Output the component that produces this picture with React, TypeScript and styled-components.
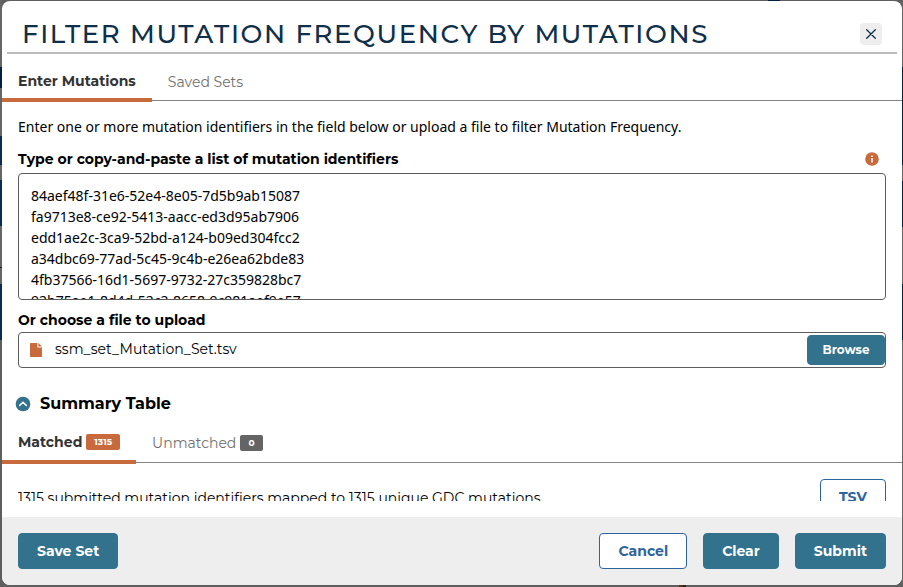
import React from "react";
import styled, { createGlobalStyle, css } from "styled-components";

const teal = "#32728d";
const blue = "#2d649e";
const orange = "#c86a3c";

const GlobalStyle = createGlobalStyle`
  * { box-sizing: border-box; }
  body {
    margin: 0;
    font-family: Montserrat, Inter, sans-serif;
    font-size: 14px;
    line-height: 20px;
    color: #000;
  }
`;

const Backdrop = styled.div`
  height: 587px;
  padding: 1px 1px 2px 2px;
  overflow: hidden;
  background:
    linear-gradient(90deg, #03213f, #03213f) 768px 0 / 12px 1px no-repeat,
    linear-gradient(#5b3010, #5b3010) 679px 585px / 4px 2px no-repeat,
    linear-gradient(#222, #222) 683px 585px / 3px 2px no-repeat,
    linear-gradient(
      #666 0 67px,
      #03213f 67px 88px,
      #666 88px 136px,
      #0b2c50 136px 165px,
      #666 165px 180px,
      #0b2c50 180px 226px,
      #666 226px 267px,
      #222 267px 268px,
      #666 268px 284px,
      #0b2c50 284px 340px,
      #5e5e5e 340px
    ) 0 0 / 2px 100% no-repeat,
    linear-gradient(
      #666 0 67px,
      #03213f 67px 165px,
      #666 165px 181px,
      #03213f 181px 227px,
      #666 227px 284px,
      #03213f 284px 340px,
      #666 340px
    ) 902px 0 / 1px 100% no-repeat,
    #5e5e5e;
`;

const Dialog = styled.section`
  display: flex;
  flex-direction: column;
  height: 584px;
  border-radius: 8px;
  overflow: hidden;
  background: #fff;
`;

const Header = styled.header`
  display: flex;
  align-items: center;
  justify-content: space-between;
  flex: none;
  height: 53px;
  margin: 0 5px;
  padding: 15px 15px 0;
  border-bottom: 2px solid #bababa;
`;

const Title = styled.h1`
  margin: 0;
  font-size: 26px;
  line-height: 36px;
  font-weight: 500;
  letter-spacing: 1.625px;
  color: #0f2f4a;
  text-transform: uppercase;
  white-space: nowrap;
`;

const CloseButton = styled.button`
  display: grid;
  place-items: center;
  width: 22px;
  height: 22px;
  padding: 0;
  border: 0;
  border-radius: 4px;
  background: #eee;
`;

const Body = styled.div`
  flex: none;
  height: 447px;
  overflow: hidden;
`;

const TabList = styled.div`
  display: flex;
  align-items: flex-end;
  height: 48px;
  background: linear-gradient(#858585, #858585) 0 calc(100% - 1px) / 100% 1px no-repeat;
`;

const Tab = styled.button<{ $active?: boolean; $drop?: number }>`
  display: flex;
  align-items: center;
  gap: 4px;
  height: 40px;
  padding: ${(p) => (p.$drop ?? 0) * 2}px 16px 0;
  border: 0;
  border-bottom: 4px solid transparent;
  background: none;
  font: 400 14px/20px Montserrat, Inter, sans-serif;
  color: #707070;
  ${(p) =>
    p.$active &&
    css`
      font-weight: 700;
      color: #333;
      border-bottom-color: ${orange};
    `}
`;

const Badge = styled.span<{ $active?: boolean }>`
  padding: 0 8px;
  border-radius: 2px;
  background: ${(p) => (p.$active ? orange : "#646464")};
  color: #fff;
  font-size: 9px;
  line-height: 16px;
  font-weight: 700;
`;

const Form = styled.div`
  display: flex;
  flex-direction: column;
  padding: 15px 16px 0;
`;

const Intro = styled.p`
  margin: 0 0 12px;
  font-family: "Noto Sans", sans-serif;
`;

const LabelRow = styled.div`
  display: flex;
  align-items: center;
  justify-content: space-between;
  height: 20px;
  padding-right: 7px;
  margin-bottom: 4px;
`;

const Label = styled.label`
  font-weight: 700;
`;

const Identifiers = styled.div`
  height: 127px;
  padding: 11px 12px 0;
  margin-bottom: 10px;
  border: 1px solid #5c5c5c;
  border-radius: 4px;
  overflow: hidden;
  font-family: "Noto Sans", sans-serif;
  line-height: 21px;
  white-space: pre;
`;

const FileField = styled.div`
  display: flex;
  align-items: center;
  height: 36px;
  margin-top: 2px;
  padding-left: 11px;
  border: 1px solid #5c5c5c;
  border-radius: 4px;
`;

const FileName = styled.span`
  flex: 1;
  padding: 0 0 2px 13px;
`;

const Button = styled.button<{ $outline?: boolean; $small?: boolean }>`
  flex: none;
  height: ${(p) => (p.$small ? 30 : 36)}px;
  padding: 0 ${(p) => (p.$small ? 14.5 : 18)}px;
  border: 1px solid ${(p) => (p.$outline ? blue : teal)};
  border-radius: 4px;
  background: ${(p) => (p.$outline ? "#fff" : teal)};
  color: ${(p) => (p.$outline ? blue : "#fff")};
  font: 700 ${(p) => (p.$small ? 12 : 14)}px/20px Montserrat, Inter, sans-serif;
`;

const SummaryHeading = styled.div`
  display: flex;
  align-items: center;
  gap: 9px;
  height: 24px;
  margin: 24px 0 0 13px;
  font-size: 16px;
  font-weight: 700;
`;

const ResultRow = styled.div`
  display: flex;
  justify-content: space-between;
  align-items: center;
  padding: 15px 16px 0;
`;

const ResultText = styled.span`
  padding-top: 2px;
`;

const Footer = styled.footer`
  display: flex;
  align-items: center;
  gap: 16px;
  height: 68px;
  margin-top: auto;
  padding: 0 16px;
  background: #eee;
`;

const Spacer = styled.div`
  flex: 1;
`;

const ids = [
  "84aef48f-31e6-52e4-8e05-7d5b9ab15087",
  "fa9713e8-ce92-5413-aacc-ed3d95ab7906",
  "edd1ae2c-3ca9-52bd-a124-b09ed304fcc2",
  "a34dbc69-77ad-5c45-9c4b-e26ea62bde83",
  "4fb37566-16d1-5697-9732-27c359828bc7",
  "92b75ae1-8d4d-52c2-8658-9c981aef9e57",
];

const CloseIcon = () => (
  <svg width="10" height="10" viewBox="0 0 10 10" stroke="#0f2f4a" strokeWidth="1.3" strokeLinecap="round">
    <path d="M.7.7l8.6 8.6M9.3.7L.7 9.3" />
  </svg>
);

const InfoIcon = () => (
  <svg width="14" height="14" viewBox="0 0 14 14">
    <circle cx="7" cy="7" r="6.8" fill={orange} />
    <path d="M6.1 3.4h1.8v1.5H6.1zM6.1 5.9h1.8v4.6H6.1z" fill="#fff" opacity=".85" />
  </svg>
);

const FileIcon = () => (
  <svg width="12" height="14" viewBox="0 0 12 14" fill={orange}>
    <path d="M.8 0H7.4V4.6H12V13.2a.8.8 0 0 1-.8.8H.8a.8.8 0 0 1-.8-.8V.8A.8.8 0 0 1 .8 0zM8.4.1L11.9 3.6H8.4z" />
  </svg>
);

const CollapseIcon = () => (
  <svg width="16" height="16" viewBox="0 0 16 16">
    <circle cx="8" cy="8" r="7.3" fill={teal} />
    <path d="M4.7 9.4L8 6.2l3.3 3.2" fill="none" stroke="#fff" strokeWidth="1.5" strokeLinecap="round" strokeLinejoin="round" />
  </svg>
);

export default function App() {
  return (
    <>
      <GlobalStyle />
      <Backdrop>
        <Dialog>
          <Header>
            <Title>Filter Mutation Frequency by Mutations</Title>
            <CloseButton aria-label="Close">
              <CloseIcon />
            </CloseButton>
          </Header>
          <Body>
            <TabList>
              <Tab $active $drop={1}>
                Enter Mutations
              </Tab>
              <Tab $drop={2}>Saved Sets</Tab>
            </TabList>
            <Form>
              <Intro>
                Enter one or more mutation identifiers in the field below or upload a file to filter Mutation Frequency.
              </Intro>
              <LabelRow>
                <Label>Type or copy-and-paste a list of mutation identifiers</Label>
                <InfoIcon />
              </LabelRow>
              <Identifiers>{ids.join("\n")}</Identifiers>
              <Label>Or choose a file to upload</Label>
              <FileField>
                <FileIcon />
                <FileName>ssm_set_Mutation_Set.tsv</FileName>
                <Button $small>Browse</Button>
              </FileField>
            </Form>
            <SummaryHeading>
              <CollapseIcon />
              Summary Table
            </SummaryHeading>
            <TabList>
              <Tab $active>
                Matched <Badge $active>1315</Badge>
              </Tab>
              <Tab $drop={1}>
                Unmatched <Badge>0</Badge>
              </Tab>
            </TabList>
            <ResultRow>
              <ResultText>1315 submitted mutation identifiers mapped to 1315 unique GDC mutations.</ResultText>
              <Button $outline>TSV</Button>
            </ResultRow>
          </Body>
          <Footer>
            <Button>Save Set</Button>
            <Spacer />
            <Button $outline>Cancel</Button>
            <Button>Clear</Button>
            <Button>Submit</Button>
          </Footer>
        </Dialog>
      </Backdrop>
    </>
  );
}
